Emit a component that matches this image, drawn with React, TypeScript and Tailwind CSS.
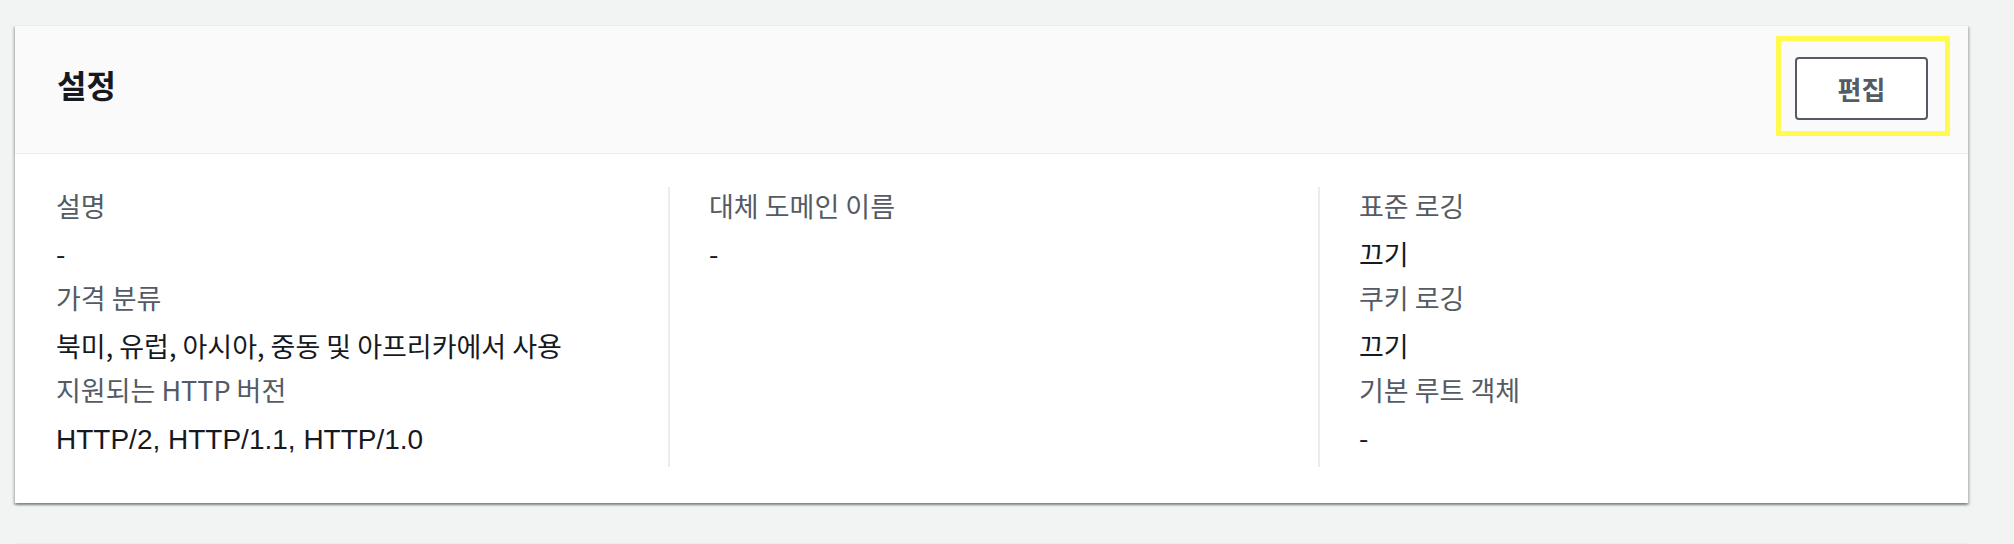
import React from 'react'

const KR = "font-['Noto_Sans_CJK_KR','Noto_Sans',sans-serif]"

type Field = { label: string; value: string; latin?: boolean }

const COLUMNS: Field[][] = [
  [
    { label: '설명', value: '-' },
    { label: '가격 분류', value: '북미, 유럽, 아시아, 중동 및 아프리카에서 사용' },
    { label: '지원되는 HTTP 버전', value: 'HTTP/2, HTTP/1.1, HTTP/1.0', latin: true },
  ],
  [{ label: '대체 도메인 이름', value: '-' }],
  [
    { label: '표준 로깅', value: '끄기' },
    { label: '쿠키 로깅', value: '끄기' },
    { label: '기본 루트 객체', value: '-' },
  ],
]

function FieldItem({ label, value, latin }: Field) {
  return (
    <div>
      <div className="text-[27px] leading-[38px] text-[#545b64]">{label}</div>
      <div
        className={
          latin
            ? "mt-[4px] font-['Liberation_Sans',sans-serif] text-[28px] leading-[54px] text-[#16191f]"
            : 'mt-[4px] text-[27px] leading-[50px] text-[#16191f]'
        }
      >
        {value}
      </div>
    </div>
  )
}

export default function App() {
  return (
    <div className={`${KR} min-h-[544px] bg-[#f2f3f3] pt-[25px] pl-[15px] pr-[46px] overflow-hidden`}>
      {/* Settings card */}
      <section className="bg-white border-t border-[#eaeded] shadow-[0_2px_2px_0_rgba(0,28,36,0.3),2px_2px_2px_0_rgba(0,28,36,0.15),-2px_2px_2px_0_rgba(0,28,36,0.15)]">
        <header className="h-[128px] flex items-center justify-between pl-[42px] pr-[40px] bg-[#fafafa] border-b border-[#eaeded]">
          <h2 className="mb-[12px] text-[32px] font-bold text-[#16191f] leading-none">설정</h2>
          <div className="relative mb-[3px]">
            <button className="w-[133px] h-[63px] flex items-center justify-center rounded-[4px] border-2 border-[#545b64] bg-white text-[26px] font-bold text-[#545b64]">
              편집
            </button>
            {/* highlight annotation */}
            <span className="absolute -left-[19px] -top-[21px] w-[174px] h-[100px] border-[5px] border-[#fffa4d] pointer-events-none" />
          </div>
        </header>

        <div className="flex pl-[41px] pt-[33px] pb-[36px]">
          {COLUMNS.map((fields, i) => (
            <div
              key={i}
              className={
                i === 0
                  ? 'w-[612px] min-h-[280px]'
                  : i === 1
                    ? 'w-[650px] min-h-[280px] border-l-2 border-[#eaeded] pl-[39px]'
                    : 'flex-1 min-h-[280px] border-l-2 border-[#eaeded] pl-[39px]'
              }
            >
              {fields.map((f) => (
                <FieldItem key={f.label} {...f} />
              ))}
            </div>
          ))}
        </div>
      </section>

      {/* Next card, cut off */}
      <section className="mt-[40px] h-[60px] bg-white border-t border-[#eaeded]" />
    </div>
  )
}
